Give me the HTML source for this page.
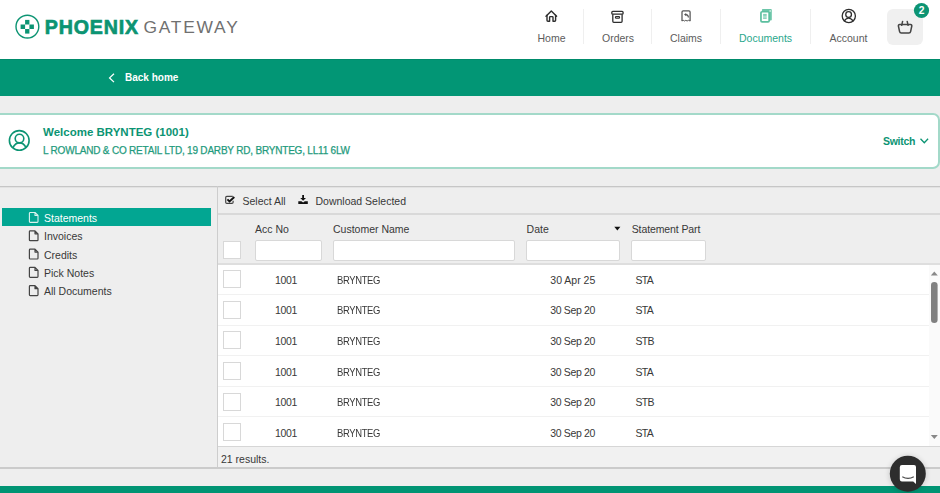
<!DOCTYPE html>
<html><head><meta charset="utf-8">
<style>
*{box-sizing:border-box;margin:0;padding:0}
html,body{width:940px;height:493px;overflow:hidden;background:#eeeeee;font-family:"Liberation Sans",sans-serif}
.abs{position:absolute}
.txt{position:absolute;white-space:nowrap;line-height:1}
#hdr{left:0;top:0;width:940px;height:59px;background:#fff}
#bar{left:0;top:59.4px;width:940px;height:36.6px;background:#029675;border-top:1px solid #008b6b}
.lbl{position:absolute;white-space:nowrap;line-height:1;top:33px;font-size:10.5px;color:#5c5c5c}
.vdiv{position:absolute;top:9px;width:1px;height:35px;background:#efefef}
#card{left:-10px;top:113px;width:950px;height:56px;background:#fff;border:2px solid #a3d9c9;border-radius:7px}
#hline{left:0;top:186px;width:940px;height:1px;background:#c6c6c6;box-shadow:0 1px 0 #e2e2e2}
#vline{left:216.6px;top:186px;width:1.5px;height:281px;background:#cdcdcd}
#fline{left:0;top:466.8px;width:940px;height:2px;background:#cbcbcb}
#foot{left:0;top:486px;width:940px;height:7px;background:#009473}
.side{position:absolute;left:44px;font-size:10.5px;color:#383838;white-space:nowrap;line-height:1}
#sel{left:2px;top:207.5px;width:209px;height:18.5px;background:#02a692}
.row{position:absolute;left:218px;width:711px;height:30.6px}
.rt{position:absolute;top:11px;font-size:10.5px;color:#383838;white-space:nowrap;line-height:1}
.row .rt{margin-left:-218px}
.row .cb{margin-left:-218px}
.cb{position:absolute;width:17.5px;height:18px;background:#fff;border:1px solid #d8d8d8}
.sep{left:218px;width:711px;height:1px;background:#f1f1f1}
.inp{position:absolute;background:#fff;border:1px solid #d8d8d8;border-radius:2px;height:21px;top:239.6px}
.th{position:absolute;top:224px;font-size:10.5px;color:#383838;white-space:nowrap;line-height:1}
</style></head><body>
<div id="hdr" class="abs"></div>
<div id="bar" class="abs"></div>
<div id="card" class="abs"></div>
<div id="hline" class="abs"></div>
<div id="fline" class="abs"></div>
<div id="foot" class="abs"></div>
<div id="sel" class="abs"></div>

<!-- logo text -->
<div class="txt" style="left:44.8px;top:18px;font-size:19.6px;font-weight:bold;color:#0c9473;letter-spacing:0.85px;-webkit-text-stroke:0.7px #0c9473">PHOENIX</div>
<div class="txt" style="left:143.5px;top:18.5px;font-size:17.4px;color:#707070;letter-spacing:1.75px">GATEWAY</div>

<!-- nav labels -->
<div class="lbl" style="left:537.5px">Home</div>
<div class="vdiv" style="left:583px"></div>
<div class="lbl" style="left:602px">Orders</div>
<div class="vdiv" style="left:651px"></div>
<div class="lbl" style="left:670px">Claims</div>
<div class="vdiv" style="left:720px"></div>
<div class="lbl" style="left:739px;color:#2aa78c">Documents</div>
<div class="vdiv" style="left:810px"></div>
<div class="lbl" style="left:829.5px">Account</div>
<div class="abs" style="left:887px;top:9px;width:36px;height:36px;background:#f0f0f0;border-radius:6px"></div>

<div class="txt" style="left:125px;top:72.5px;font-size:10px;font-weight:bold;color:#fff">Back home</div>

<div class="txt" style="left:43px;top:126.6px;font-size:11.5px;font-weight:bold;color:#0c9473">Welcome BRYNTEG (1001)</div>
<div class="txt" style="left:43px;top:145.5px;font-size:10px;color:#1f9b7d;letter-spacing:-0.2px;-webkit-text-stroke:0.25px #1f9b7d">L ROWLAND &amp; CO RETAIL LTD, 19 DARBY RD, BRYNTEG, LL11 6LW</div>
<div class="txt" style="left:883px;top:136px;font-size:10.5px;font-weight:bold;color:#0c9473;letter-spacing:-0.3px">Switch</div>

<div class="side" style="top:212.5px;color:#fff">Statements</div>
<div class="side" style="top:231.4px">Invoices</div>
<div class="side" style="top:249.8px">Credits</div>
<div class="side" style="top:268px">Pick Notes</div>
<div class="side" style="top:286.2px">All Documents</div>

<div id="vline" class="abs"></div>
<!-- toolbar -->
<div class="abs" style="left:218px;top:213px;width:722px;height:2px;background:#d9d9d9"></div>
<div class="txt" style="left:242.5px;top:196px;font-size:10.5px;color:#383838">Select All</div>
<div class="txt" style="left:315.5px;top:196px;font-size:10.5px;color:#383838">Download Selected</div>

<div class="th" style="left:255px">Acc No</div>
<div class="th" style="left:333px">Customer Name</div>
<div class="th" style="left:526.6px">Date</div>
<div class="th" style="left:631.7px;letter-spacing:-0.1px">Statement Part</div>
<div class="cb" style="left:223px;top:240.7px"></div>
<div class="inp" style="left:254.6px;width:67.2px"></div>
<div class="inp" style="left:332.8px;width:182px"></div>
<div class="inp" style="left:526.2px;width:94.2px"></div>
<div class="inp" style="left:631.3px;width:74.4px"></div>
<div class="abs" style="left:218px;top:263px;width:722px;height:2px;background:#dedede"></div>

<div class="abs" style="left:218px;top:265px;width:722px;height:181px;background:#fff"></div>
<div class="abs" style="left:928.6px;top:265px;width:11.4px;height:181px;background:#fafafa"></div>
<div class="row" style="top:263.8px"><div class="cb" style="left:223px;top:6.2px;height:18.2px"></div><div class="rt" style="left:275px;letter-spacing:-0.35px">1001</div><div class="rt" style="left:337px;letter-spacing:-0.4px;transform:scaleX(0.9);transform-origin:0 0">BRYNTEG</div><div class="rt" style="left:550.3px;letter-spacing:0">30 Apr 25</div><div class="rt" style="left:635.5px;letter-spacing:-0.75px">STA</div></div>
<div class="abs sep" style="top:293.8px"></div>
<div class="row" style="top:294.4px"><div class="cb" style="left:223px;top:6.2px;height:18.2px"></div><div class="rt" style="left:275px;letter-spacing:-0.35px">1001</div><div class="rt" style="left:337px;letter-spacing:-0.4px;transform:scaleX(0.9);transform-origin:0 0">BRYNTEG</div><div class="rt" style="left:550.3px;letter-spacing:-0.36px">30 Sep 20</div><div class="rt" style="left:635.5px;letter-spacing:-0.75px">STA</div></div>
<div class="abs sep" style="top:324.5px"></div>
<div class="row" style="top:325.1px"><div class="cb" style="left:223px;top:6.2px;height:18.2px"></div><div class="rt" style="left:275px;letter-spacing:-0.35px">1001</div><div class="rt" style="left:337px;letter-spacing:-0.4px;transform:scaleX(0.9);transform-origin:0 0">BRYNTEG</div><div class="rt" style="left:550.3px;letter-spacing:-0.36px">30 Sep 20</div><div class="rt" style="left:635.5px;letter-spacing:-0.75px">STB</div></div>
<div class="abs sep" style="top:355.1px"></div>
<div class="row" style="top:355.8px"><div class="cb" style="left:223px;top:6.2px;height:18.2px"></div><div class="rt" style="left:275px;letter-spacing:-0.35px">1001</div><div class="rt" style="left:337px;letter-spacing:-0.4px;transform:scaleX(0.9);transform-origin:0 0">BRYNTEG</div><div class="rt" style="left:550.3px;letter-spacing:-0.36px">30 Sep 20</div><div class="rt" style="left:635.5px;letter-spacing:-0.75px">STA</div></div>
<div class="abs sep" style="top:385.8px"></div>
<div class="row" style="top:386.4px"><div class="cb" style="left:223px;top:6.2px;height:18.2px"></div><div class="rt" style="left:275px;letter-spacing:-0.35px">1001</div><div class="rt" style="left:337px;letter-spacing:-0.4px;transform:scaleX(0.9);transform-origin:0 0">BRYNTEG</div><div class="rt" style="left:550.3px;letter-spacing:-0.36px">30 Sep 20</div><div class="rt" style="left:635.5px;letter-spacing:-0.75px">STB</div></div>
<div class="abs sep" style="top:416.4px"></div>
<div class="row" style="top:417.1px"><div class="cb" style="left:223px;top:6.2px;height:18.2px"></div><div class="rt" style="left:275px;letter-spacing:-0.35px">1001</div><div class="rt" style="left:337px;letter-spacing:-0.4px;transform:scaleX(0.9);transform-origin:0 0">BRYNTEG</div><div class="rt" style="left:550.3px;letter-spacing:-0.36px">30 Sep 20</div><div class="rt" style="left:635.5px;letter-spacing:-0.75px">STA</div></div>
<div class="abs" style="left:218px;top:446px;width:722px;height:21px;background:#f1f1f1"></div>
<div class="abs" style="left:218px;top:445.6px;width:722px;height:1.2px;background:#d6d6d6"></div>
<div class="txt" style="left:221px;top:454px;font-size:10.5px;color:#383838">21 results.</div>

<svg class="abs" style="left:0;top:0" width="940" height="493" viewBox="0 0 940 493">
  <!-- logo -->
  <g fill="#0c9473">
    <circle cx="27.4" cy="26.6" r="11.4" fill="none" stroke="#0c9473" stroke-width="1.4"/>
    <rect x="25.1" y="19.9" width="4.3" height="4.6"/>
    <rect x="20.6" y="24.5" width="4.5" height="4.5"/>
    <rect x="29.4" y="24.5" width="4.5" height="4.5"/>
    <rect x="25.1" y="29" width="4.3" height="4.6"/>
  </g>
  <!-- home -->
  <g fill="none" stroke="#2e2e2e" stroke-width="1.4" stroke-linejoin="round" stroke-linecap="round">
    <path d="M546,16.2 L551.3,11 L556.6,16.2"/>
    <path d="M547,15.3 V20.3 Q547,21.2 547.9,21.2 H549.6 V17.3 Q549.6,16.6 550.3,16.6 H552.3 Q553,16.6 553,17.3 V21.2 H554.7 Q555.6,21.2 555.6,20.3 V15.3"/>
  </g>
  <!-- orders -->
  <g fill="none" stroke="#2e2e2e" stroke-width="1.3" stroke-linejoin="round">
    <rect x="611.8" y="11.4" width="11.3" height="2.8" rx="1"/>
    <path d="M612.8,14.2 V21.3 Q612.8,22.3 613.8,22.3 H621.1 Q622.1,22.3 622.1,21.3 V14.2"/>
    <rect x="615.4" y="16.6" width="4.2" height="1.6" rx="0.8" stroke-width="1.1"/>
  </g>
  <!-- claims -->
  <g fill="none" stroke="#555" stroke-width="1.25" stroke-linejoin="round">
    <path d="M682,20.9 V12 Q682,10.8 683.2,10.8 H688.9 Q690.1,10.8 690.1,12 V20.9"/>
    <path d="M681.9,21 L683.2,20.3 L684.5,21 L685.8,20.3 L687.1,21 L688.4,20.3 L690.2,21" stroke-width="1"/>
  </g>
  <g fill="#555">
    <path d="M684,14.6 L686.2,12.9 L686.2,16.3 Z"/>
  </g>
  <path d="M686,14.6 Q688.4,14.8 688.4,17.6" fill="none" stroke="#555" stroke-width="1.1"/>
  <!-- documents -->
  <path d="M762.9,9 H770.8 Q771.8,9 771.8,10 V19.6 Q771.8,20.6 770.8,20.6 H762.9 Q761.9,20.6 761.9,19.6 V10 Q761.9,9 762.9,9 Z" fill="#6cc6a9"/>
  <rect x="760.95" y="11.75" width="8.2" height="10.2" rx="1.1" fill="#fff" stroke="#5bbf9f" stroke-width="1.7"/>
  <circle cx="770.1" cy="11" r="0.75" fill="#fff"/>
  <g stroke="#6cc6a9" stroke-width="0.95"><line x1="763.1" y1="14.4" x2="766.7" y2="14.4"/><line x1="763.1" y1="15.7" x2="766.7" y2="15.7"/><line x1="763.1" y1="17" x2="766.7" y2="17"/><line x1="763.1" y1="18.3" x2="766.7" y2="18.3"/></g>
  <!-- account -->
  <g fill="none" stroke="#2e2e2e" stroke-width="1.3">
    <circle cx="848.8" cy="16" r="6.6"/>
    <circle cx="848.6" cy="14.5" r="2.85"/>
    <path d="M844,21.4 Q845.9,18.1 848.6,18.1 Q851.3,18.1 853.3,21.4"/>
  </g>
  <!-- basket -->
  <g fill="none" stroke="#444" stroke-width="1.5" stroke-linejoin="round" stroke-linecap="round">
    <path d="M899.6,24.6 H910.6 Q912,24.6 911.8,26 L910.6,31.6 Q910.3,33 908.9,33 H901.3 Q899.9,33 899.6,31.6 L898.4,26 Q898.2,24.6 899.6,24.6 Z"/>
    <path d="M902.6,21.4 L901.7,25.3 M907.2,21.4 L908.1,25.3"/>
  </g>
  <!-- badge -->
  <circle cx="921.5" cy="10.5" r="7.6" fill="#0c9473"/>
  <text x="921.6" y="13.5" font-family="Liberation Sans" font-weight="bold" font-size="10.3" fill="#fff" text-anchor="middle">2</text>
  <!-- back chevron -->
  <path d="M114,73.7 L109.6,77.9 L114,82.1" fill="none" stroke="#fff" stroke-width="1.3"/>
  <!-- welcome user -->
  <g fill="none" stroke="#0c9473" stroke-width="1.6">
    <circle cx="19.25" cy="140.45" r="9.85"/>
    <circle cx="19.5" cy="138.6" r="4.3"/>
    <path d="M12.9,147.6 Q15.3,142.9 19.5,142.9 Q23.7,142.9 26.1,147.6"/>
  </g>
  <!-- switch chevron -->
  <path d="M920.5,138.7 L924.3,142.7 L928.1,138.7" fill="none" stroke="#0c9473" stroke-width="1.3"/>
  <!-- sidebar file icons -->
  
  <g fill="none" stroke="#dcf3ee" stroke-width="1.1" stroke-linejoin="round">
    <path d="M30.2,212.5 H35 L38,215.5 V221.6 Q38,222.4 37.2,222.4 H30.2 Q29.4,222.4 29.4,221.6 V213.3 Q29.4,212.5 30.2,212.5 Z M35,212.5 V215.5 H38"/>
  </g>
  <g fill="none" stroke="#444" stroke-width="1.2" stroke-linejoin="round">
    <path transform="translate(0,18.3)" d="M30.2,212.5 H35 L38,215.5 V221.6 Q38,222.4 37.2,222.4 H30.2 Q29.4,222.4 29.4,221.6 V213.3 Q29.4,212.5 30.2,212.5 Z M35,212.5 V215.5 H38"/>
    <path transform="translate(0,36.6)" d="M30.2,212.5 H35 L38,215.5 V221.6 Q38,222.4 37.2,222.4 H30.2 Q29.4,222.4 29.4,221.6 V213.3 Q29.4,212.5 30.2,212.5 Z M35,212.5 V215.5 H38"/>
    <path transform="translate(0,54.9)" d="M30.2,212.5 H35 L38,215.5 V221.6 Q38,222.4 37.2,222.4 H30.2 Q29.4,222.4 29.4,221.6 V213.3 Q29.4,212.5 30.2,212.5 Z M35,212.5 V215.5 H38"/>
    <path transform="translate(0,73.2)" d="M30.2,212.5 H35 L38,215.5 V221.6 Q38,222.4 37.2,222.4 H30.2 Q29.4,222.4 29.4,221.6 V213.3 Q29.4,212.5 30.2,212.5 Z M35,212.5 V215.5 H38"/>
  </g>
  <!-- select all icon -->
  <path d="M232.8,196.3 H226.8 Q225.7,196.3 225.7,197.4 V202.3 Q225.7,203.4 226.8,203.4 H232 Q233.1,203.4 233.1,202.3 V200.8" fill="none" stroke="#444" stroke-width="1.2"/>
  <path d="M227.4,199.4 L229.5,201.4 L234.3,197" fill="none" stroke="#111" stroke-width="1.9"/>
  <!-- download icon -->
  <path d="M302.2,195 H304 V198 H306 L303.1,200.8 L300.2,198 H302.2 Z" fill="#111"/>
  <path d="M298.3,201.2 H301.4 L303.1,202.4 L304.8,201.2 H307.8 V204 H298.3 Z" fill="#111"/>
  <!-- sort arrow -->
  <path d="M614.3,226.8 H620.4 L617.35,230.6 Z" fill="#111"/>
  <!-- scrollbar -->
  <path d="M930.8,275.4 L934.3,271.4 L937.8,275.4 Z" fill="#888"/>
  <rect x="931" y="282" width="6.6" height="41" rx="3.3" fill="#808080"/>
  <path d="M930.8,435 L934.3,439 L937.8,435 Z" fill="#888"/>
  <!-- chat -->
  <defs><filter id="sh" x="-50%" y="-50%" width="200%" height="200%"><feGaussianBlur stdDeviation="2.5"/></filter></defs>
  <circle cx="907.8" cy="474.2" r="19" fill="#000" opacity="0.12" filter="url(#sh)"/>
  <circle cx="907.8" cy="473.7" r="18" fill="#2d2d2d"/>
  <path d="M902,465 H914 Q916,465 916,467 V484 L913.2,481.4 H902 Q899.8,481.4 899.8,479.2 V467.2 Q899.8,465 902,465 Z" fill="#fff"/>
  <path d="M902.3,476.7 Q908,479.9 913.8,476.7" fill="none" stroke="#4a4a4a" stroke-width="1.15"/>
</svg>
</body></html>
